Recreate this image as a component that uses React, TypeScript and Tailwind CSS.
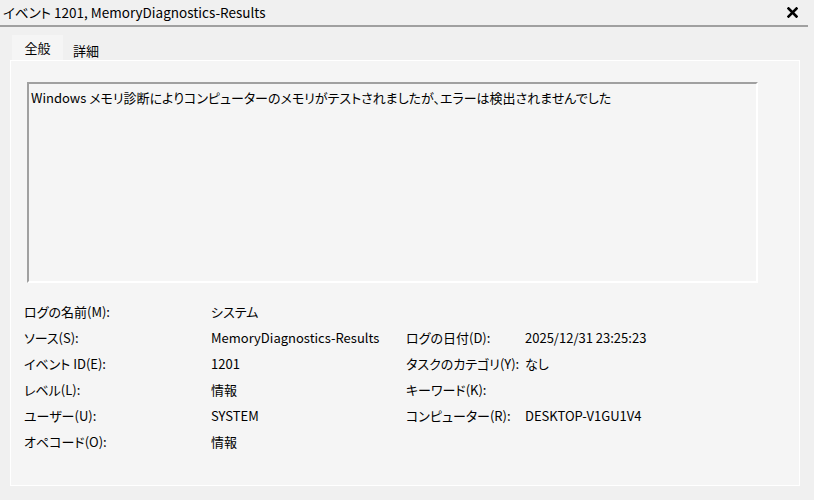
import React from "react";

const rows: [string, string, string, string][] = [
  ["ログの名前(M):", "システム", "", ""],
  ["ソース(S):", "MemoryDiagnostics-Results", "ログの日付(D):", "2025/12/31 23:25:23"],
  ["イベント ID(E):", "1201", "タスクのカテゴリ(Y):", "なし"],
  ["レベル(L):", "情報", "キーワード(K):", ""],
  ["ユーザー(U):", "SYSTEM", "コンピューター(R):", "DESKTOP-V1GU1V4"],
  ["オペコード(O):", "情報", "", ""],
];

export default function App() {
  return (
    <div className="w-[814px] h-[500px] bg-[#f0f0f0] text-black text-[13px] overflow-hidden font-['Noto_Sans_CJK_JP','Noto_Sans',sans-serif] [font-feature-settings:'palt']">
      <div className="h-[25px] flex items-center justify-between pl-[3px] pr-[16px]">
        <span className="leading-none text-[13.5px]">イベント 1201, MemoryDiagnostics-Results</span>
        <svg width="11" height="11" viewBox="0 0 11 11">
          <path d="M1.5 1.5 L9.5 9.5 M9.5 1.5 L1.5 9.5" stroke="#000" strokeWidth="2.6" strokeLinecap="square" />
        </svg>
      </div>
      <div className="h-[2px] w-[808px] bg-[#a0a0a0]" />
      <div className="flex items-end ml-[12px] mt-[8px] h-[25px]">
        <div className="w-[51px] h-[25px] bg-[#f5f5f5] flex items-center justify-center leading-none">全般</div>
        <div className="w-[49px] h-[22px] flex items-center justify-center leading-none pt-[2px] pr-[3px]">詳細</div>
      </div>
      <div className="ml-[10px] w-[790px] h-[426px] bg-[#f5f5f5] border border-white">
        <div className="ml-[16px] mt-[21px] w-[731px] h-[201px] border-t-2 border-l-2 border-t-[#a0a0a0] border-l-[#a0a0a0] border-b-2 border-r-2 border-b-white border-r-white">
          <div className="pl-[2px] pt-[5px] leading-[18px] whitespace-nowrap">
            Windows メモリ診断によりコンピューターのメモリがテストされましたが、エラーは検出されませんでした
          </div>
        </div>
        <div className="ml-[13px] mt-[15px]">
          {rows.map((r, i) => (
            <div key={i} className="flex h-[26px] items-center leading-none whitespace-nowrap">
              <div className="w-[187px]">{r[0]}</div>
              <div className="w-[195px]">{r[1]}</div>
              <div className="w-[119px]">{r[2]}</div>
              <div>{r[3]}</div>
            </div>
          ))}
        </div>
      </div>
    </div>
  );
}
